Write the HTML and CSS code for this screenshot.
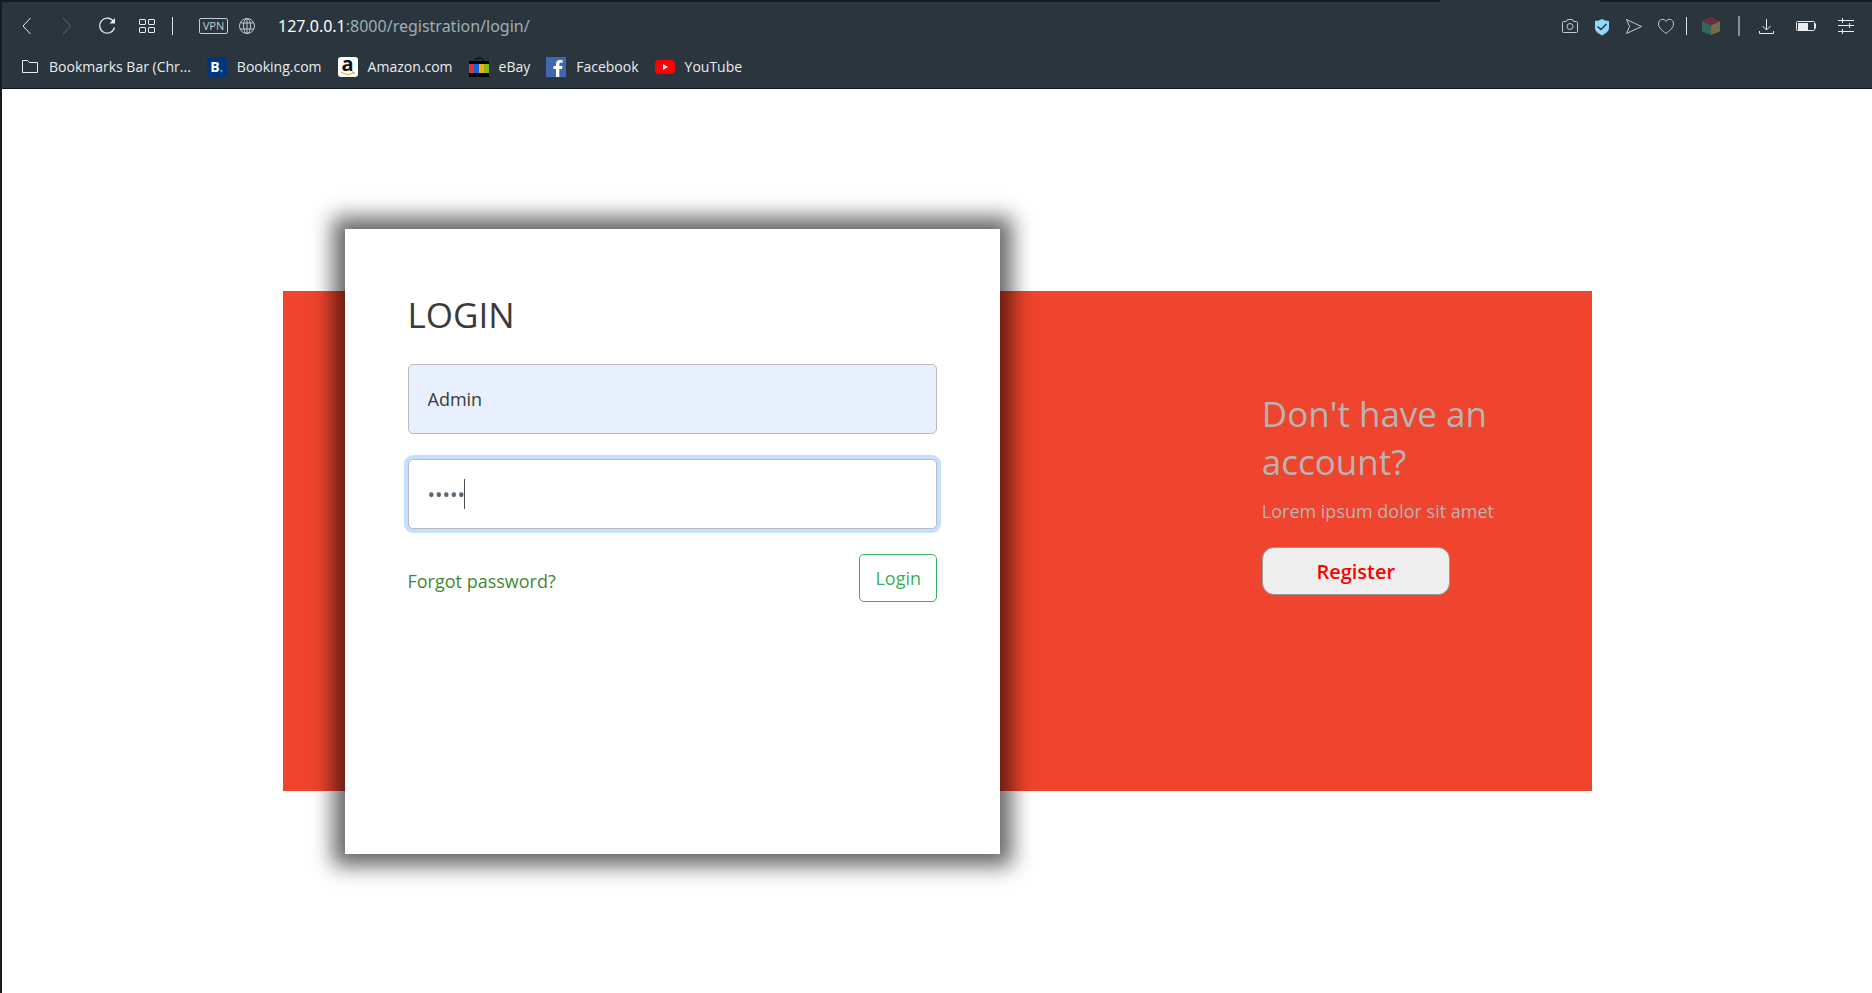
FILE: index.html
```html
<!DOCTYPE html>
<html lang="en">
<head>
<meta charset="utf-8">
<title>Login</title>
<link rel="stylesheet" href="styles.css">
</head>
<body>
<header class="browser">
  <div class="tab-edge"><span class="active-tab"></span></div>
  <nav class="toolbar" aria-label="Browser toolbar">
    <div class="nav-group">
      <button class="tool" aria-label="Back"><svg width="24" height="24" viewBox="0 0 24 24"><path d="M15.5 4 8 12l7.500 8"/></svg></button>
      <button class="tool dim" aria-label="Forward"><svg width="24" height="24" viewBox="0 0 24 24"><path d="M8 4l7.500 8L8 20"/></svg></button>
      <button class="tool" aria-label="Reload"><svg width="24" height="24" viewBox="0 0 24 24"><path d="M18.500 7.500A7.500 7.500 0 1 0 19.500 13.500" stroke-width="1.200"/><path d="M20 4v5.500h-5.500z" fill="currentColor" stroke="none"/></svg></button>
      <button class="tool" aria-label="Speed dial"><svg width="24" height="24" viewBox="0 0 24 24"><rect x="4.500" y="5.500" width="6" height="5" rx=".5"/><rect x="13.500" y="5.500" width="6" height="5" rx=".5"/><rect x="4.500" y="13.500" width="6" height="5" rx=".5"/><rect x="13.500" y="13.500" width="6" height="5" rx=".5"/></svg></button>
    </div>
    <span class="divider"></span>
    <div class="address">
      <button class="vpn">VPN</button>
      <button class="globe" aria-label="Site information"><svg width="18" height="18" viewBox="0 0 18 18"><circle cx="9" cy="9" r="7.500"/><ellipse cx="9" cy="9" rx="3.500" ry="7.500"/><path d="M9 1.500v15M2.500 6h13M2.500 12h13"/></svg></button>
      <span class="url"><span class="host">127.0.0.1</span>:8000/registration/login/</span>
    </div>
    <div class="share-group">
      <button class="tool soft" aria-label="Snapshot"><svg width="24" height="24" viewBox="0 0 24 24"><path d="M5.500 7.500h3l1-2h5l1 2h3q1 0 1 1v9q0 1-1 1h-13q-1 0-1-1v-9q0-1 1-1z"/><circle cx="12" cy="12.500" r="3"/></svg></button>
      <button class="tool" aria-label="Ad blocker"><svg width="24" height="24" viewBox="0 0 24 24"><path d="M12 5c2 1.300 4.500 2 7 2v7c0 4-4 5.500-7 7.500-3-2-7-3.500-7-7.500V7c2.500 0 5-.7 7-2z" fill="#8fd8ff" stroke="none"/><path d="M7.500 12.500l3.500 3 5.500-5.500" stroke="#2b353d" stroke-width="1.500"/></svg></button>
      <button class="tool soft" aria-label="Send"><svg width="24" height="24" viewBox="0 0 24 24"><path d="M4.500 5.500 19.500 12.500 4.500 19.500 7.500 12.500z"/></svg></button>
      <button class="tool soft" aria-label="Favourite"><svg width="24" height="24" viewBox="0 0 24 24"><path d="M12 7.500C10.500 4 4.500 4.500 4.500 10c0 4 4 6.500 7.500 9.500 3.500-3 7.500-5.500 7.500-9.500 0-5.500-6-6-7.500-2.500z"/></svg></button>
    </div>
    <span class="divider near"></span>
    <button class="tool" aria-label="Extension"><svg width="24" height="24" viewBox="0 0 24 24" stroke="none"><path d="M12 3l9 4-9 4.500L3 7z" fill="#692f3b"/><path d="M3 7l9 4.500V21l-9-3.500z" fill="#326660"/><path d="M21 7l-9 4.500V21l9-3.500z" fill="#77694a"/></svg></button>
    <span class="divider thick"></span>
    <div class="nav-group">
      <button class="tool" aria-label="Downloads"><svg width="24" height="24" viewBox="0 0 24 24"><path d="M12.500 5v11M8.500 12l4 4 4-4M5.500 17v2.500h14V17"/></svg></button>
      <button class="tool" aria-label="Battery"><svg width="24" height="24" viewBox="0 0 24 24"><rect x="2.500" y="7.500" width="18" height="9" rx="1"/><rect x="4" y="9" width="10" height="7" fill="currentColor" stroke="none"/><path d="M21.500 9.500v5"/></svg></button>
      <button class="tool" aria-label="Easy setup"><svg width="24" height="24" viewBox="0 0 24 24"><path d="M4 6.500h16M4 11.500h16M4 17.500h16M8.500 4v5M15.500 9v5M8.500 15v5"/></svg></button>
    </div>
  </nav>
  <nav class="bookmarks" aria-label="Bookmarks">
    <a href="#"><svg width="18" height="20" viewBox="0 0 18 20"><path d="M1.500 3.500h5l2 2h8v10h-15z"/></svg>Bookmarks Bar (Chr...</a>
    <a href="#"><span class="booking">B<i>.</i></span>Booking.com</a>
    <a href="#"><span class="amazon">a<svg width="16" height="5" viewBox="0 0 16 5"><path d="M1 1q7 4.500 13 .5M12 1h2v2" stroke="#f79b1c"/></svg></span>Amazon.com</a>
    <a href="#"><svg width="20" height="20" viewBox="0 0 20 20" stroke="none"><path d="M0 4h20v16H0z" fill="#000"/><path d="M5.500 5C6-.5 14-.5 14.500 5" fill="none" stroke="#10151a" stroke-width="1.500"/><path d="M0 7h5v9H0z" fill="#e43137"/><path d="M5 7h5v9H5z" fill="#0f65d6"/><path d="M10 7h5v9h-5z" fill="#f5af02"/><path d="M15 7h5v9h-5z" fill="#86b817"/></svg>eBay</a>
    <a href="#"><svg width="20" height="20" viewBox="0 0 20 20" stroke="none"><path d="M0 0h20v20H0z" fill="#4267b2"/><path d="M10 20v-8H7.500V9H10V7c0-2.500 1.500-4 4-4h2.500v2.800H15c-1.300 0-1.700.6-1.700 1.700V9h3.200l-.5 3h-2.700v8z" fill="#fff"/></svg>Facebook</a>
    <a href="#"><svg width="20" height="20" viewBox="0 0 20 20" stroke="none"><rect x="0" y="3" width="20" height="14" rx="4" fill="#f00"/><path d="M8 7l5 3-5 3z" fill="#fff"/></svg>YouTube</a>
  </nav>
</header>
<main class="page">
  <section class="panel">
    <form class="card">
      <h1>LOGIN</h1>
      <input class="field filled" type="text" aria-label="Username" value="Admin">
      <div class="secret">
        <input class="field active" type="password" aria-label="Password" value="admin">
        <span class="caret"></span>
      </div>
      <div class="actions">
        <a href="#">Forgot password?</a>
        <button type="button" class="login">Login</button>
      </div>
    </form>
    <aside class="signup">
      <h2>Don't have an account?</h2>
      <p>Lorem ipsum dolor sit amet</p>
      <button type="button" class="register">Register</button>
    </aside>
  </section>
</main>
</body>
</html>
```
FILE: styles.css
```css
* { box-sizing: border-box; }

body {
  margin: 0;
  min-height: 100vh;
  border-left: 2px solid #171b20;
  background: #fff;
  font-family: "Open Sans", "Noto Sans", sans-serif;
  font-size: 18px;
  color: #3a3a3a;
}

button, input { font: inherit; }

/* Browser frame */
.browser {
  background: #2b353d;
  border-bottom: 1px solid #13171b;
  color: #e9ecee;
}

.tab-edge {
  display: flex;
  justify-content: flex-end;
  height: 2px;
  padding-right: 272px;
  background: #171b20;
}

.active-tab { width: 160px; background: #2b353d; }

.toolbar {
  display: flex;
  align-items: center;
  height: 48px;
  padding: 0 14px 0 13px;
}

.toolbar svg, .bookmarks svg {
  display: block;
  fill: none;
  stroke: currentColor;
}

.toolbar svg[stroke="none"], .bookmarks svg[stroke="none"] { stroke: none; }

.nav-group { display: flex; gap: 16px; }

.share-group { display: flex; gap: 8px; }

.tool, .globe {
  padding: 0;
  border: 0;
  background: none;
  color: #e9ecee;
}

.tool.dim { color: #5e6870; }
.tool.soft, .globe { color: #c3cad0; }

.divider {
  width: 1px;
  height: 18px;
  margin: 0 26px 0 13px;
  background: #dfe3e6;
}

.divider.near { margin: 0 12px 0 8px; }

.divider.thick {
  width: 2px;
  height: 20px;
  margin: 0 14px 0 15px;
  background: #8b8f93;
}

.address {
  display: flex;
  flex: 1;
  align-items: center;
  gap: 10px;
}

.vpn {
  width: 29px;
  height: 16px;
  padding: 0;
  border: 1px solid #c3cad0;
  border-radius: 2px;
  background: none;
  color: #c3cad0;
  font-size: 11px;
  line-height: 14px;
}

.url {
  margin-left: 12px;
  color: #9fadb8;
  font-family: "Noto Sans", sans-serif;
  font-size: 16px;
  line-height: 24px;
}

.host { color: #fff; }

.bookmarks {
  display: flex;
  align-items: center;
  gap: 16px;
  height: 38px;
  padding: 0 19px 4px;
}

.bookmarks a {
  display: flex;
  align-items: center;
  gap: 10px;
  color: #e9ecee;
  font-size: 14px;
  line-height: 20px;
  text-decoration: none;
}

.booking, .amazon {
  width: 20px;
  height: 20px;
  border-radius: 3px;
  font-weight: 700;
  text-align: center;
}

.booking { background: #003580; color: #fff; font-size: 14px; }
.booking i { color: #1ba9ea; font-style: normal; }

.amazon {
  display: grid;
  justify-items: center;
  align-content: start;
  background: #fff;
  color: #111;
  font-size: 20px;
  line-height: 14px;
}

/* Login page */
.page { padding: 202px 15%; }

.panel {
  display: flex;
  align-items: center;
  min-height: 500px;
  background: #ef442d;
}

.card {
  width: calc(50% + 1px);
  min-height: 625px;
  margin: -62px 0 -63px 62px;
  padding: 62px 63px;
  background: #fff;
  box-shadow: 0 0 20px 12px rgba(0, 0, 0, 0.6);
}

h1 {
  margin: 0 0 25px;
  font-size: 35px;
  font-weight: 400;
  line-height: 48px;
}

.field {
  display: block;
  width: 100%;
  height: 70px;
  padding: 0 19px;
  border: 1px solid #bababa;
  border-radius: 5px;
  outline: 0;
  background: #fff;
  color: #3a3a3a;
}

.filled { background: #e8f0fe; }

.active {
  box-shadow: 0 0 0 4px #c5e0ff;
  color: #5f666d;
  font-size: 20px;
}

.secret { position: relative; margin: 25px 0; }

.caret {
  position: absolute;
  top: 20px;
  left: 56px;
  width: 1px;
  height: 30px;
  background: #495057;
}

.actions {
  display: flex;
  align-items: flex-start;
  justify-content: space-between;
}

.actions a {
  color: #3f8a2d;
  line-height: 54px;
  text-decoration: none;
}

.login {
  height: 48px;
  padding: 0 15px;
  border: 1px solid #3aae58;
  border-radius: 5px;
  background: #fff;
  color: #3aae58;
}

.signup {
  width: 20%;
  margin-left: 20%;
  margin-bottom: 97px;
  color: #b9b3b2;
}

h2 {
  margin: 0 0 10px;
  font-size: 35px;
  font-weight: 400;
  line-height: 48px;
}

.signup p { margin: 0 0 21px; line-height: 30px; }

.register {
  width: 188px;
  height: 48px;
  border: 1px solid #999;
  border-radius: 12px;
  background: #efefef;
  color: #f00;
  font-size: 20px;
  font-weight: 600;
}
```
